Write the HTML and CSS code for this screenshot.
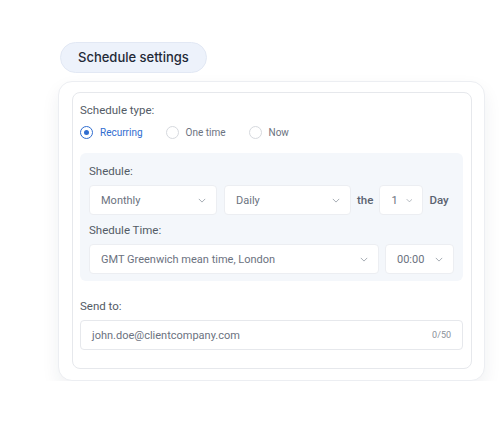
FILE: index.html
```html
<!DOCTYPE html>
<html lang="en">
<head>
  <meta charset="UTF-8" />
  <title>Schedule settings</title>
  <link rel="stylesheet" href="styles.css">
</head>
<body>
  <div class="wrap">
    <div class="pill">Schedule settings</div>

    <div class="card">
      <div class="inner">
        <div class="label">Schedule type:</div>
        <div class="radios">
          <label class="radio active"><span class="dot"></span>Recurring</label>
          <label class="radio"><span class="dot"></span>One time</label>
          <label class="radio"><span class="dot"></span>Now</label>
        </div>

        <div class="panel">
          <div class="label">Shedule:</div>
          <div class="row">
            <div class="select w-month">Monthly<svg class="chev" viewBox="0 0 10 6"><path d="M1 1l4 4 4-4"/></svg></div>
            <div class="select w-day">Daily<svg class="chev" viewBox="0 0 10 6"><path d="M1 1l4 4 4-4"/></svg></div>
            <span class="word">the</span>
            <div class="select w-num">1<svg class="chev" viewBox="0 0 10 6"><path d="M1 1l4 4 4-4"/></svg></div>
            <span class="word">Day</span>
          </div>

          <div class="label">Shedule Time:</div>
          <div class="row last">
            <div class="select w-zone">GMT Greenwich mean time, London<svg class="chev" viewBox="0 0 10 6"><path d="M1 1l4 4 4-4"/></svg></div>
            <div class="select w-time">00:00<svg class="chev" viewBox="0 0 10 6"><path d="M1 1l4 4 4-4"/></svg></div>
          </div>
        </div>

        <div class="label send">Send to:</div>
        <div class="input">
          <span>john.doe@clientcompany.com</span>
          <span class="count">0/50</span>
        </div>
      </div>
    </div>
  </div>
</body>
</html>
```

FILE: styles.css
```css
* {
  box-sizing: border-box;
  margin: 0;
  padding: 0;
}

body {
  font-family: Roboto, 'Liberation Sans', sans-serif;
  background: #fff;
  color: #4b5563;
}

.wrap {
  padding: 42px 0 0 58px;
}

.pill {
  display: inline-block;
  margin-left: 2px;
  height: 31px;
  line-height: 29px;
  padding: 0 17px;
  border-radius: 16px;
  background: #edf2fb;
  border: 1px solid #e2e8f4;
  font-family: Inter, sans-serif;
  font-weight: 500;
  font-size: 13px;
  color: #1f2937;
}

.card {
  margin-top: 8px;
  width: 427px;
  padding: 10px 12px 11px 13px;
  border: 1px solid #eceef2;
  border-radius: 14px;
  background: #fff;
  box-shadow: 0 8px 18px rgba(30, 40, 70, 0.07);
}

.inner {
  border: 1px solid #e6e8ec;
  border-radius: 8px;
  padding: 9px 8px 18px 7px;
}

.label {
  font-size: 11.5px;
  line-height: 16px;
  color: #535b66;
}

.radios {
  display: flex;
  margin-top: 5px;
  height: 18px;
  align-items: center;
}

.radio {
  display: flex;
  align-items: center;
  font-size: 10px;
  color: #6b7280;
  margin-right: 23px;
}

.radio .dot {
  width: 13px;
  height: 13px;
  border-radius: 50%;
  border: 1px solid #d6d9de;
  margin-right: 7px;
  display: flex;
  align-items: center;
  justify-content: center;
}

.radio.active {
  color: #2f6dd0;
}

.radio.active .dot {
  border: 1.5px solid #2f6dd0;
}

.radio.active .dot::after {
  content: '';
  width: 5px;
  height: 5px;
  border-radius: 50%;
  background: #2f6dd0;
}

.panel {
  margin-top: 12px;
  background: #f4f7fb;
  border-radius: 6px;
  padding: 10px 9px 7px 9px;
}

.row {
  display: flex;
  align-items: center;
  margin: 6px 0 7px;
}

.row.last {
  margin-bottom: 0;
}

.select {
  flex-shrink: 0;
  height: 30px;
  display: flex;
  align-items: center;
  justify-content: space-between;
  padding: 0 10px 0 11px;
  background: #fff;
  border: 1px solid #eceef2;
  border-radius: 4px;
  font-size: 11px;
  color: #6b7280;
}

.chev {
  width: 8px;
  height: 5px;
  fill: none;
  stroke: #a3a9b2;
  stroke-width: 1.2;
}

.w-month { width: 128px; margin-right: 7px; }
.w-day { width: 127px; }
.w-num { width: 44px; }
.w-zone { width: 290px; margin-right: 6px; }
.w-time { width: 69px; }

.w-num .chev,
.w-time .chev {
  margin-left: 8px;
}

.word {
  font-size: 11.5px;
  font-weight: 500;
  color: #5b6370;
  margin: 0 6px;
}

.send {
  margin-top: 17px;
}

.input {
  margin-top: 6px;
  height: 30px;
  display: flex;
  align-items: center;
  justify-content: space-between;
  padding: 0 11px;
  border: 1px solid #e6e8ec;
  border-radius: 4px;
  font-size: 11px;
  color: #6b7280;
}

.count {
  font-size: 9px;
  color: #8a9099;
}
```
